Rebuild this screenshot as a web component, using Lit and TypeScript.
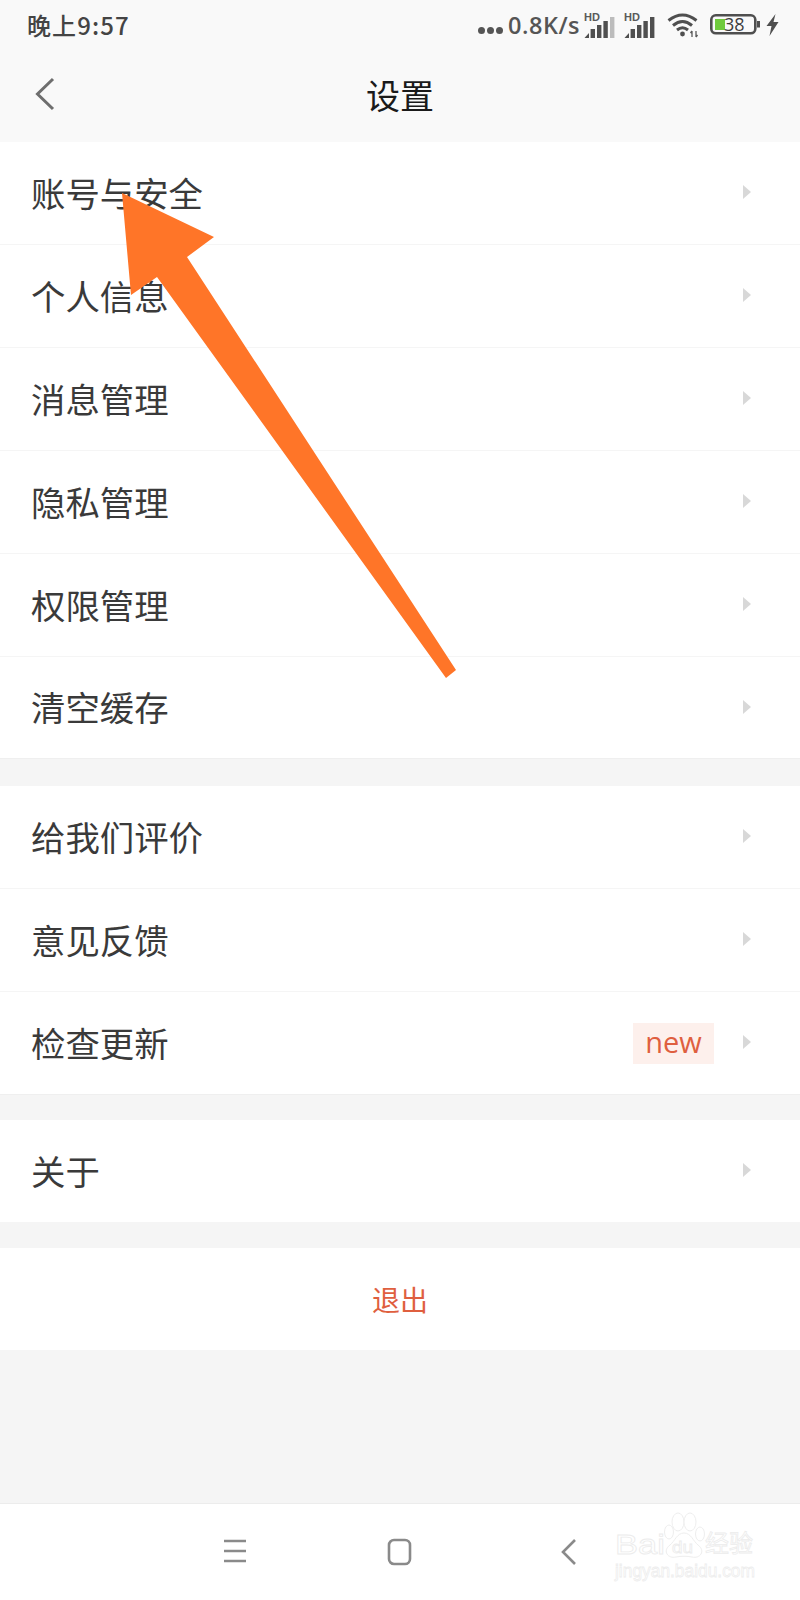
import { LitElement, html, css } from "lit";
import { customElement } from "lit/decorators.js";

const chevron = html`<svg class="chev" width="8" height="14" viewBox="0 0 8 14"><path d="M0 0 L8 7 L0 14 Z" fill="#d8d8d8"/></svg>`;

const signal = (lastFaint: boolean) => html`
  <svg class="sig" width="31" height="30" viewBox="0 0 31 30">
    <text x="0" y="11" font-size="11" font-weight="700" fill="#5a5a5a" font-family="Liberation Sans, sans-serif">HD</text>
    <path d="M0.5 28 L5 23 V28 Z" fill="#4f4f4f"/>
    <rect x="6.6" y="19" width="4.4" height="9" fill="#4f4f4f"/>
    <rect x="13" y="15" width="4.4" height="13" fill="#4f4f4f"/>
    <rect x="19.4" y="11" width="4.4" height="17" fill="#4f4f4f"/>
    <rect x="26" y="7" width="4.4" height="21" fill="${lastFaint ? "#bcbcbc" : "#4f4f4f"}"/>
  </svg>`;

@customElement("app-root")
export class AppRoot extends LitElement {
  static styles = css`
    :host { display: block; width: 800px; height: 1600px; position: relative; overflow: hidden; background: #f5f5f5; font-family: "Noto Sans CJK SC", "Noto Sans", sans-serif; }
    .top { background: #f9f9f9; height: 142px; display: flex; flex-direction: column; }
    .status { height: 50px; display: flex; align-items: center; justify-content: space-between; padding: 0 21px 0 27px; color: #444; }
    .time { font-size: 24px; font-weight: 500; line-height: 50px; letter-spacing: 1.1px; }
    .icons { display: flex; align-items: center; }
    .dots { display: flex; gap: 2px; margin-top: 10px; margin-right: 5px; }
    .dots i { width: 7px; height: 7px; border-radius: 50%; background: #555; display: block; }
    .speed { font-family: "Open Sans", "Liberation Sans", sans-serif; font-size: 23.5px; font-weight: 600; color: #555; letter-spacing: 0.5px; margin-right: 4px; }
    .sig { display: block; margin-right: 9px; overflow: visible; }
    .sig + .sig { margin-right: 0; margin-left: 0; }
    .wifi { margin-left: 12px; margin-right: 12px; display: block; overflow: visible; }
    .bolt { margin-left: 6px; display: block; }
    .batt { display: block; overflow: visible; }
    .nav { flex: 1; display: flex; align-items: center; justify-content: center; position: relative; padding-bottom: 2px; }
    .back { position: absolute; left: 35px; top: 27px; }
    .title { font-size: 34px; color: #1a1a1a; line-height: 1; }
    .group { background: #fff; }
    .g1 { margin-bottom: 27px; }
    .g2 { margin-bottom: 25px; }
    .g3 { margin-bottom: 26px; }
    .row { height: 103px; box-sizing: border-box; display: flex; align-items: center; padding: 0 49px 0 31px; font-size: 34.4px; color: #3a3a3a; border-bottom: 1px solid #f5f5f5; }
    .row:last-child { border-bottom-color: #efefef; }
    .g1 .row:last-child { height: 102px; }
    .g3 .row { height: 102px; border-bottom: none; }
    .label { flex: 1; line-height: 1; position: relative; top: -1px; }
    .chev { display: block; margin-top: -2px; }
    .new { width: 81px; height: 41px; margin-right: 29px; background: #fdf0ec; color: #df5f3f; font-family: "Open Sans", sans-serif; font-size: 29px; display: flex; align-items: center; justify-content: center; line-height: 1; padding-bottom: 3px; box-sizing: border-box; }
    .exit { height: 102px; background: #fff; display: flex; align-items: center; justify-content: center; color: #df5f3f; font-size: 28px; line-height: 1; }
    .bottom { position: absolute; left: 0; right: 0; bottom: 0; height: 96px; background: #fff; border-top: 1px solid #ececec; }
    .btn { position: absolute; display: block; }
    .mark { position: absolute; left: 600px; top: -5px; }
    .arrow { position: absolute; left: 0; top: 0; pointer-events: none; }
  `;

  private row(label: string, extra: unknown = "") {
    return html`<div class="row"><span class="label">${label}</span>${extra}${chevron}</div>`;
  }

  render() {
    return html`
      <div class="top">
        <div class="status">
          <span class="time">晚上9:57</span>
          <div class="icons">
            <div class="dots"><i></i><i></i><i></i></div>
            <span class="speed">0.8K/s</span>
            ${signal(true)}${signal(false)}
            <svg class="wifi" width="31" height="24" viewBox="0 0 31 24">
              <path d="M1.5 7.5 Q15.5 -3.5 29.5 7.5" fill="none" stroke="#4f4f4f" stroke-width="3"/>
              <path d="M6 12.5 Q15.5 4.5 25 12.5" fill="none" stroke="#4f4f4f" stroke-width="3"/>
              <path d="M10 17 Q15.5 12.5 21 17" fill="none" stroke="#4f4f4f" stroke-width="3"/>
              <circle cx="15.5" cy="21" r="2.4" fill="#4f4f4f"/>
              <path d="M25 18 v6 M23.5 20 L25 18 M29 18 v6 M29 24 L30.5 22" stroke="#5a5a5a" stroke-width="1.3" fill="none"/>
            </svg>
            <svg class="batt" width="50" height="22" viewBox="0 0 50 22">
              <rect x="1.3" y="1.3" width="44" height="18" rx="4.5" fill="none" stroke="#4f4f4f" stroke-width="2.6"/>
              <rect x="5" y="5" width="10" height="11" fill="#6fca3c"/>
              <rect x="47" y="7" width="3" height="6.5" fill="#4f4f4f"/>
              <text x="14" y="17" font-size="18" fill="#3d3d3d" font-family="Open Sans, sans-serif">38</text>
            </svg>
            <svg class="bolt" width="13" height="22" viewBox="0 0 13 22"><path d="M9.5 0 L0.5 12 H5.5 L3.5 22 L12.5 8 H7.5 Z" fill="#4f4f4f"/></svg>
          </div>
        </div>
        <div class="nav">
          <svg class="back" width="20" height="34" viewBox="0 0 20 34"><path d="M18 2 L2.5 17 L18 32" fill="none" stroke="#6e6e6e" stroke-width="3"/></svg>
          <span class="title">设置</span>
        </div>
      </div>

      <div class="group g1">
        ${this.row("账号与安全")}${this.row("个人信息")}${this.row("消息管理")}${this.row("隐私管理")}${this.row("权限管理")}${this.row("清空缓存")}
      </div>
      <div class="group g2">
        ${this.row("给我们评价")}${this.row("意见反馈")}
        ${this.row("检查更新", html`<span class="new">new</span>`)}
      </div>
      <div class="group g3">${this.row("关于")}</div>
      <div class="exit">退出</div>

      <div class="bottom">
        <svg class="btn" style="left:222px;top:34px" width="26" height="26" viewBox="0 0 26 26">
          <path d="M2 3 H24 M2 13 H24 M2 23 H24" stroke="#8a8a8a" stroke-width="2.4"/>
        </svg>
        <svg class="btn" style="left:387px;top:34px" width="26" height="28" viewBox="0 0 26 28">
          <rect x="2" y="2" width="21" height="24" rx="5" fill="none" stroke="#8a8a8a" stroke-width="2.6"/>
        </svg>
        <svg class="btn" style="left:560px;top:34px" width="18" height="28" viewBox="0 0 18 28">
          <path d="M15 2 L3 14 L15 26" fill="none" stroke="#8a8a8a" stroke-width="2.6"/>
        </svg>
        <svg class="mark" viewBox="0 0 170 95" width="170" height="95">
          <g fill="#fff" stroke="#eeeeee" stroke-width="1">
            <ellipse cx="78" cy="23" rx="6" ry="9"/>
            <ellipse cx="90" cy="23" rx="6" ry="9"/>
            <ellipse cx="69" cy="33" rx="4.5" ry="7"/>
            <ellipse cx="100" cy="35" rx="4.5" ry="7"/>
            <path d="M84 34 C77 34 75 42 70 46 C62 52 68 60 76 58 C81 57 87 57 92 58 C100 60 106 52 98 46 C93 42 91 34 84 34 Z"/>
          </g>
          <g fill="#fff" stroke="#ececec" stroke-width="0.8">
            <text x="15" y="55" font-size="28" font-family="Liberation Sans, sans-serif" textLength="50" lengthAdjust="spacingAndGlyphs">Bai</text>
            <text x="72" y="54" font-size="17" font-family="Liberation Sans, sans-serif" textLength="21" lengthAdjust="spacingAndGlyphs">du</text>
            <text x="105" y="53" font-size="24" font-family="Noto Sans CJK SC, sans-serif" textLength="48">经验</text>
          </g>
          <text x="15" y="78" font-size="19" fill="#fff" stroke="#ededed" stroke-width="0.8" font-family="Liberation Sans, sans-serif" textLength="140" lengthAdjust="spacingAndGlyphs">jingyan.baidu.com</text>
        </svg>
      </div>

      <svg class="arrow" width="800" height="1600" viewBox="0 0 800 1600">
        <polygon points="122,193 214,237 187,257 456,670 446,678 157,277 131,295" fill="#ff7528"/>
      </svg>
    `;
  }
}
